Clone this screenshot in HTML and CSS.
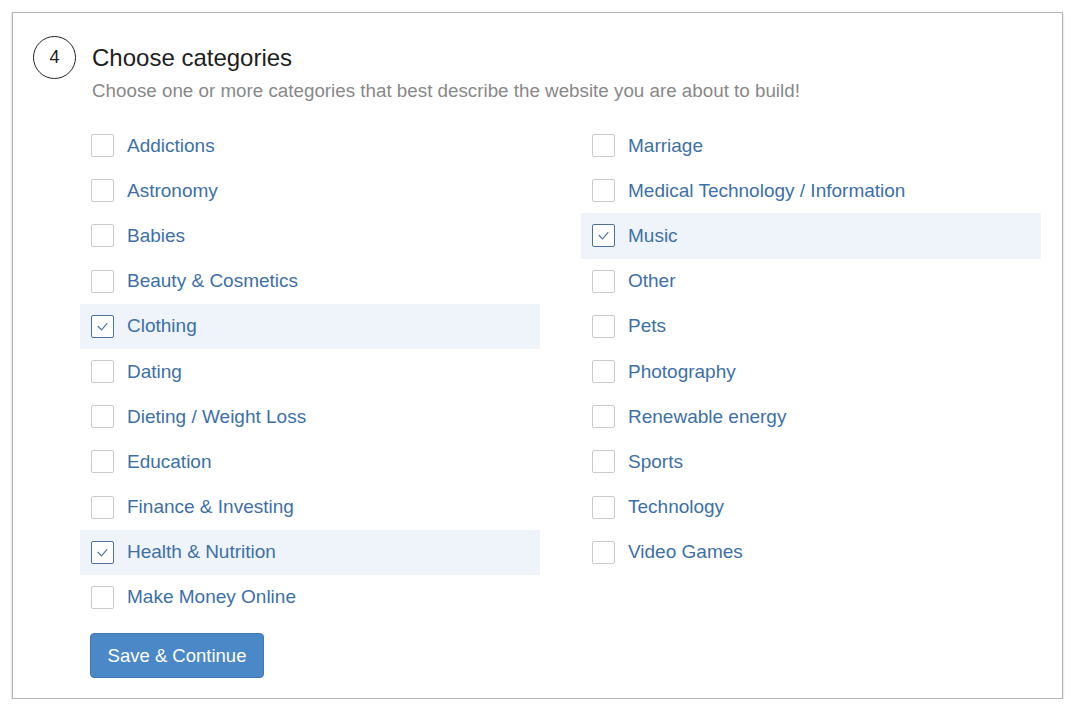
FILE: index.html
```html
<!DOCTYPE html>
<html lang="en">
<head>
    <meta charset="UTF-8">
    <title>Choose categories</title>
    <link rel="stylesheet" href="styles.css">
</head>
<body>
    <div class="card">
        <div class="header">
            <div class="step">4</div>
            <h2>Choose categories</h2>
        </div>
        <p class="hint">Choose one or more categories that best describe the website you are about to build!</p>

        <div class="columns">
            <div class="column">
                <label class="row"><span class="box"></span>Addictions</label>
                <label class="row"><span class="box"></span>Astronomy</label>
                <label class="row"><span class="box"></span>Babies</label>
                <label class="row"><span class="box"></span>Beauty &amp; Cosmetics</label>
                <label class="row checked"><span class="box"><svg viewBox="0 0 22 22"><polyline points="6,10.5 10,14.5 16,7.5"/></svg></span>Clothing</label>
                <label class="row"><span class="box"></span>Dating</label>
                <label class="row"><span class="box"></span>Dieting / Weight Loss</label>
                <label class="row"><span class="box"></span>Education</label>
                <label class="row"><span class="box"></span>Finance &amp; Investing</label>
                <label class="row checked"><span class="box"><svg viewBox="0 0 22 22"><polyline points="6,10.5 10,14.5 16,7.5"/></svg></span>Health &amp; Nutrition</label>
                <label class="row"><span class="box"></span>Make Money Online</label>
            </div>
            <div class="column">
                <label class="row"><span class="box"></span>Marriage</label>
                <label class="row"><span class="box"></span>Medical Technology / Information</label>
                <label class="row checked"><span class="box"><svg viewBox="0 0 22 22"><polyline points="6,10.5 10,14.5 16,7.5"/></svg></span>Music</label>
                <label class="row"><span class="box"></span>Other</label>
                <label class="row"><span class="box"></span>Pets</label>
                <label class="row"><span class="box"></span>Photography</label>
                <label class="row"><span class="box"></span>Renewable energy</label>
                <label class="row"><span class="box"></span>Sports</label>
                <label class="row"><span class="box"></span>Technology</label>
                <label class="row"><span class="box"></span>Video Games</label>
            </div>
        </div>

        <button class="save">Save &amp; Continue</button>
    </div>
</body>
</html>
```

FILE: styles.css
```css
body { margin: 0; background: #fff; font-family: "Liberation Sans", Arial, sans-serif; }

.card {
    box-sizing: border-box;
    width: 1051px;
    height: 687px;
    margin: 12px 0 0 12px;
    padding: 23px 20px 19px 20px;
    border: 1px solid #b4b4b4;
    box-shadow: 0 1px 2px rgba(0, 0, 0, 0.25);
    background: #fff;
}

.header { display: flex; align-items: center; }
.step {
    box-sizing: border-box;
    width: 43px;
    height: 43px;
    border: 1.5px solid #222;
    border-radius: 50%;
    display: flex;
    align-items: center;
    justify-content: center;
    font-size: 18px;
    color: #222;
}
.header h2 { margin: 0 0 0 16px; font-size: 24px; font-weight: normal; color: #1e1e1e; line-height: 43px; }

.hint { margin: 0 0 0 59px; font-size: 18.8px; line-height: 24px; color: #888; }

.columns { display: grid; grid-template-columns: 460px 460px; column-gap: 41px; margin: 20px 0 0 47px; }
.row {
    display: flex;
    align-items: center;
    height: 45.2px;
    padding-left: 11px;
    font-size: 19px;
    color: #3d70a6;
    cursor: pointer;
}
.row.checked { background: #eff4fa; }

.box {
    box-sizing: border-box;
    width: 23px;
    height: 23px;
    margin-right: 13px;
    border: 1px solid #cacaca;
    border-radius: 2px;
    background: #fff;
    flex-shrink: 0;
}
.row.checked .box { border-color: #4f7199; }
.box svg { display: block; width: 21px; height: 21px; }
.box polyline { fill: none; stroke: #4f7199; stroke-width: 1.2; }

.save {
    margin: 13px 0 0 57px;
    width: 174px;
    height: 45px;
    border: 1px solid #4179b5;
    border-radius: 4px;
    background: #4a88c7;
    color: #fff;
    font-family: inherit;
    font-size: 18.5px;
    cursor: pointer;
}
```
